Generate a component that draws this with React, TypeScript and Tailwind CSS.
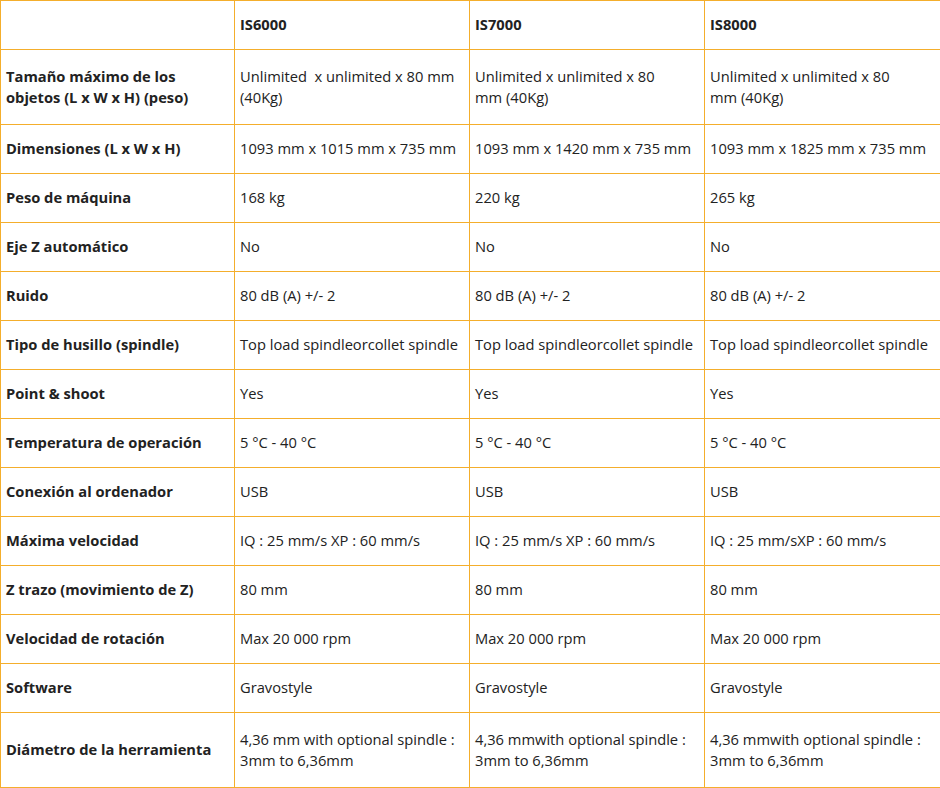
const models = ['IS6000', 'IS7000', 'IS8000']

type Row = { label: React.ReactNode; values: React.ReactNode[]; tall?: boolean }

const rows: Row[] = [
  {
    label: <>Tamaño máximo de los<br />objetos (L x W x H) (peso)</>,
    values: [
      <>Unlimited&nbsp; x unlimited x 80 mm<br />(40Kg)</>,
      <>Unlimited x unlimited x 80<br />mm (40Kg)</>,
      <>Unlimited x unlimited x 80<br />mm (40Kg)</>,
    ],
    tall: true,
  },
  {
    label: 'Dimensiones (L x W x H)',
    values: ['1093 mm x 1015 mm x 735 mm', '1093 mm x 1420 mm x 735 mm', '1093 mm x 1825 mm x 735 mm'],
  },
  { label: 'Peso de máquina', values: ['168 kg', '220 kg', '265 kg'] },
  { label: 'Eje Z automático', values: ['No', 'No', 'No'] },
  { label: 'Ruido', values: ['80 dB (A) +/- 2', '80 dB (A) +/- 2', '80 dB (A) +/- 2'] },
  {
    label: 'Tipo de husillo (spindle)',
    values: ['Top load spindleorcollet spindle', 'Top load spindleorcollet spindle', 'Top load spindleorcollet spindle'],
  },
  { label: 'Point & shoot', values: ['Yes', 'Yes', 'Yes'] },
  { label: 'Temperatura de operación', values: ['5 °C - 40 °C', '5 °C - 40 °C', '5 °C - 40 °C'] },
  { label: 'Conexión al ordenador', values: ['USB', 'USB', 'USB'] },
  {
    label: 'Máxima velocidad',
    values: ['IQ : 25 mm/s XP : 60 mm/s', 'IQ : 25 mm/s XP : 60 mm/s', 'IQ : 25 mm/sXP : 60 mm/s'],
  },
  { label: 'Z trazo (movimiento de Z)', values: ['80 mm', '80 mm', '80 mm'] },
  { label: 'Velocidad de rotación', values: ['Max 20 000 rpm', 'Max 20 000 rpm', 'Max 20 000 rpm'] },
  { label: 'Software', values: ['Gravostyle', 'Gravostyle', 'Gravostyle'] },
  {
    label: 'Diámetro de la herramienta',
    values: [
      <>4,36 mm with optional spindle :<br />3mm to 6,36mm</>,
      <>4,36 mmwith optional spindle :<br />3mm to 6,36mm</>,
      <>4,36 mmwith optional spindle :<br />3mm to 6,36mm</>,
    ],
    tall: true,
  },
]

const cell = 'border border-[#f4ae2c] pl-[5px] pr-0 pt-0 pb-[1px] align-middle text-left whitespace-nowrap'

export default function App() {
  return (
    <div className="w-[940px] bg-white font-['Open_Sans',sans-serif] text-[14.7px] leading-[21px] text-[#222]">
      <table className="w-[940px] table-fixed border-collapse">
        <colgroup>
          <col className="w-[234px]" />
          <col className="w-[235px]" />
          <col className="w-[235px]" />
          <col className="w-[236px]" />
        </colgroup>
        <thead>
          <tr className="h-[49px]">
            <th className={cell}></th>
            {models.map((m) => (
              <th key={m} className={`${cell} font-bold`}>
                {m}
              </th>
            ))}
          </tr>
        </thead>
        <tbody>
          {rows.map((r, idx) => (
            <tr key={idx} className={r.tall ? 'h-[75px]' : 'h-[49px]'}>
              <td className={`${cell} font-bold`}>{r.label}</td>
              {r.values.map((v, i) => (
                <td key={i} className={cell}>
                  {v}
                </td>
              ))}
            </tr>
          ))}
        </tbody>
      </table>
    </div>
  )
}
